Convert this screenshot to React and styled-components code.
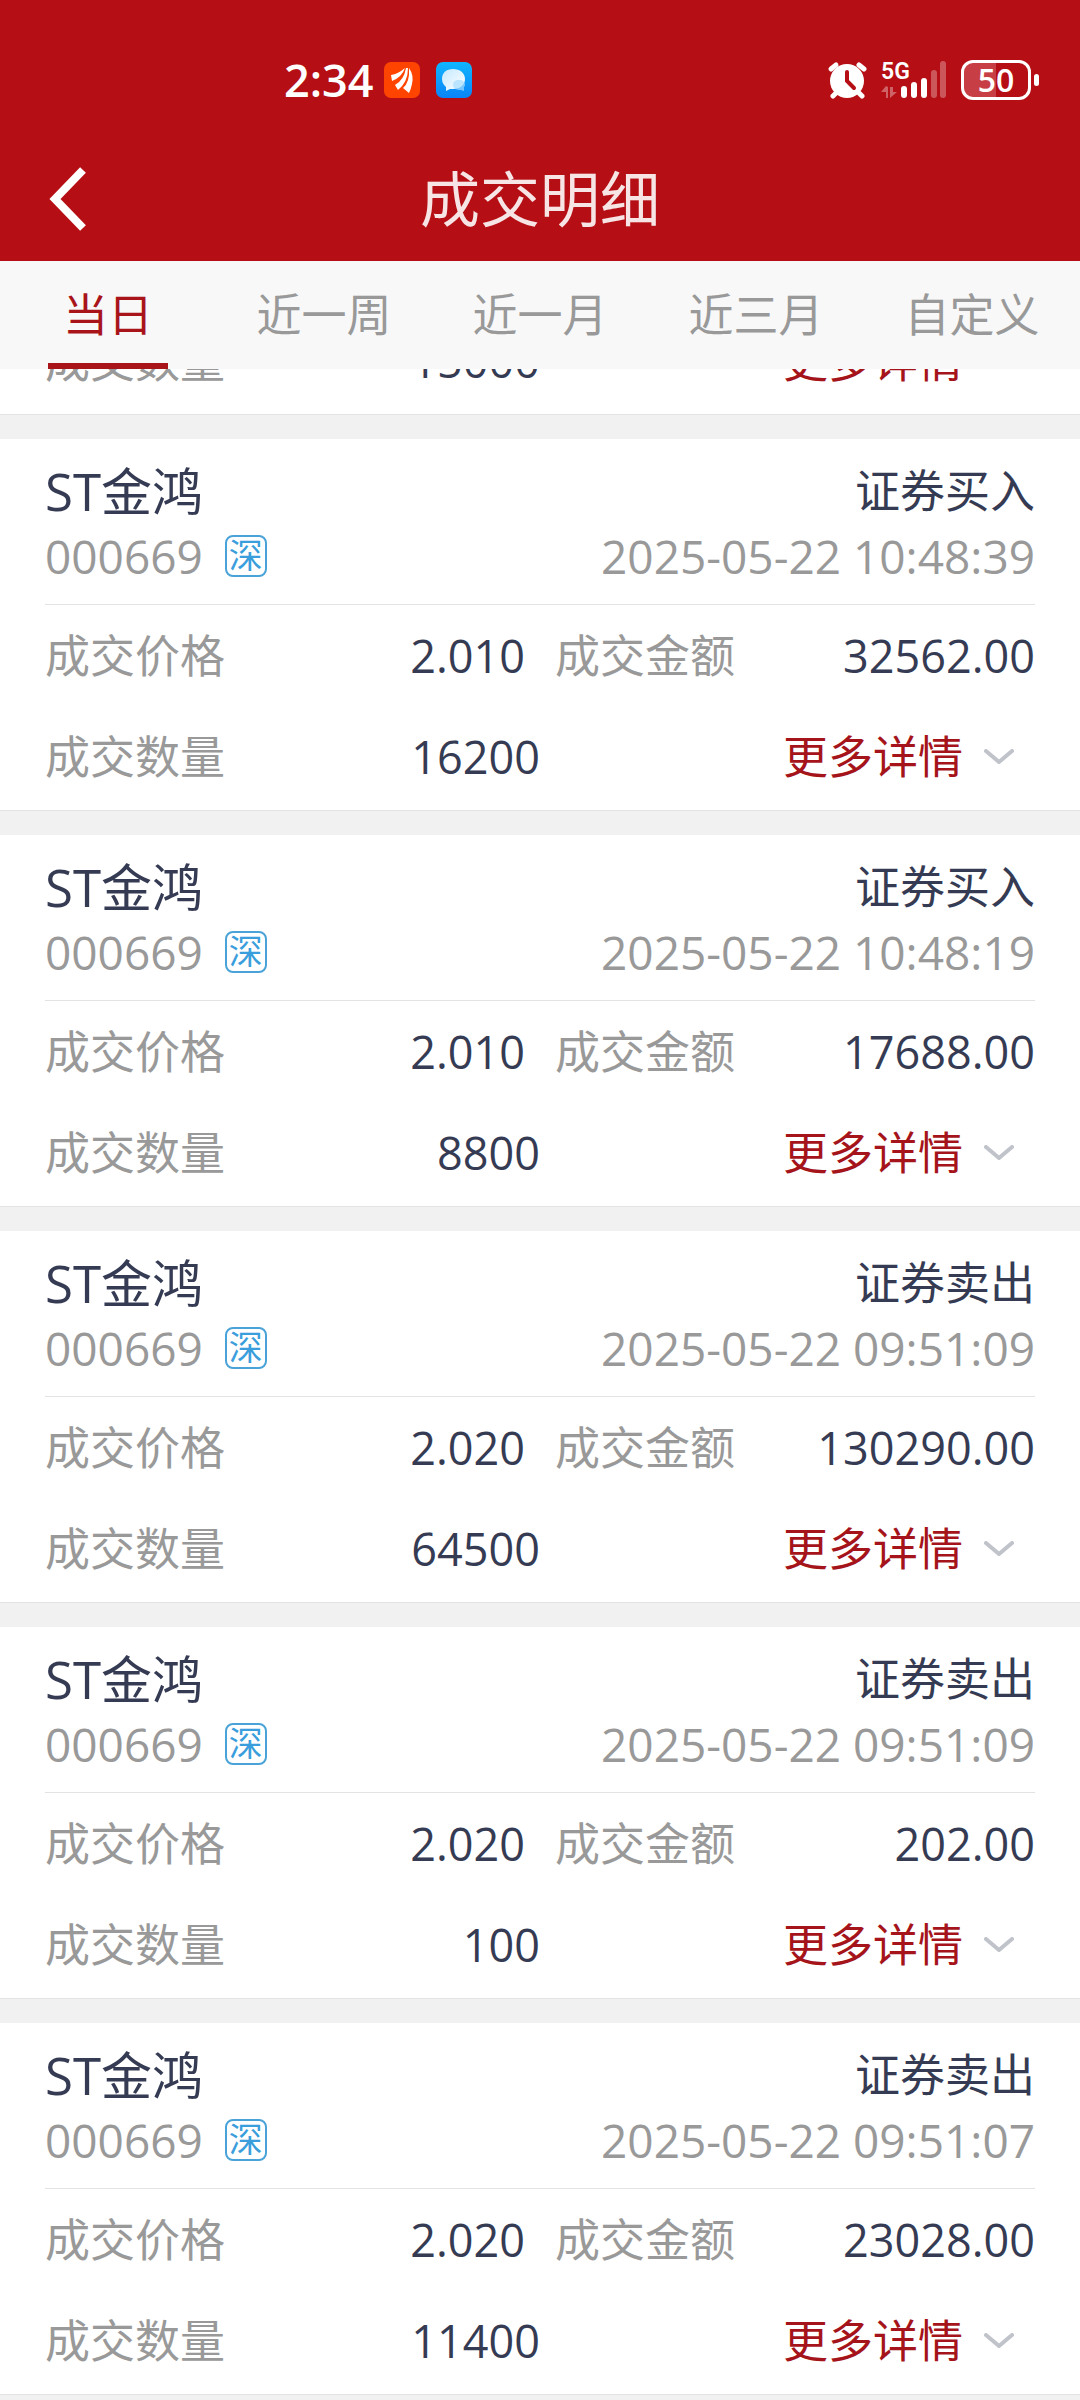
import { useState } from "react";
import styled, { createGlobalStyle } from "styled-components";

const tabs = ["当日", "近一周", "近一月", "近三月", "自定义"];

const trades = [
  {
    side: "证券买入",
    time: "2025-05-22 10:48:39",
    price: "2.010",
    amount: "32562.00",
    quantity: "16200",
  },
  {
    side: "证券买入",
    time: "2025-05-22 10:48:19",
    price: "2.010",
    amount: "17688.00",
    quantity: "8800",
  },
  {
    side: "证券卖出",
    time: "2025-05-22 09:51:09",
    price: "2.020",
    amount: "130290.00",
    quantity: "64500",
  },
  {
    side: "证券卖出",
    time: "2025-05-22 09:51:09",
    price: "2.020",
    amount: "202.00",
    quantity: "100",
  },
  {
    side: "证券卖出",
    time: "2025-05-22 09:51:07",
    price: "2.020",
    amount: "23028.00",
    quantity: "11400",
  },
];

function App() {
  const [active, setActive] = useState("当日");

  return (
    <Page>
      <GlobalStyle />
      <Header>
        <StatusBar />
        <TitleBar>
          <BackButton aria-label="返回">
            <svg width="40" height="64" viewBox="0 0 40 64">
              <path d="M35 3 L7 32 L35 61" fill="none" stroke="#fff" strokeWidth="8" />
            </svg>
          </BackButton>
          <Title>成交明细</Title>
        </TitleBar>
      </Header>
      <Tabs>
        {tabs.map((tab) => (
          <Tab key={tab} $active={tab === active} onClick={() => setActive(tab)}>
            {tab}
          </Tab>
        ))}
      </Tabs>
      <List>
        <ScrolledCard>
          <QuantityRow quantity="15000" />
        </ScrolledCard>
        {trades.map((trade, i) => (
          <Trade key={i} {...trade} />
        ))}
      </List>
    </Page>
  );
}

function Trade({ side, time, price, amount, quantity }) {
  return (
    <Card>
      <CardHead>
        <HeadLine>
          <Name>ST金鸿</Name>
          <Side>{side}</Side>
        </HeadLine>
        <HeadLine>
          <Code>
            000669
            <Market>深</Market>
          </Code>
          <time>{time}</time>
        </HeadLine>
      </CardHead>
      <Row $gap="30px">
        <Cell>
          <Label>成交价格</Label>
          <Value>{price}</Value>
        </Cell>
        <Cell>
          <Label>成交金额</Label>
          <Value>{amount}</Value>
        </Cell>
      </Row>
      <QuantityRow quantity={quantity} />
    </Card>
  );
}

function QuantityRow({ quantity }) {
  return (
    <Row $gap="0">
      <Cell>
        <Label>成交数量</Label>
        <Value>{quantity}</Value>
      </Cell>
      <MoreButton>
        更多详情
        <svg width="30" height="16" viewBox="0 0 30 16">
          <path
            d="M2 2 L15 13 L28 2"
            fill="none"
            stroke="#c1c3cb"
            strokeWidth="4"
            strokeLinecap="round"
            strokeLinejoin="round"
          />
        </svg>
      </MoreButton>
    </Row>
  );
}

function StatusBar() {
  return (
    <Status>
      <StatusGroup $gap="16px">
        <Clock>2:34</Clock>
        <svg width="36" height="36" viewBox="0 0 36 36">
          <rect width="36" height="36" rx="7" fill="#ff4400" />
          <path d="M7 13 Q14 12 21 6 Q18 15 8 19 Z" fill="#fff" />
          <path d="M22 6 L24 6 Q24 20 14 28 L11 23 Q20 18 22 6 Z" fill="#fff" />
          <path d="M25 6 Q30 13 28 22 Q27 27 25 31 L19 26 Q26 20 25 6 Z" fill="#fff" />
        </svg>
        <svg width="36" height="36" viewBox="0 0 36 36">
          <defs>
            <linearGradient id="chatBg" x1="0" y1="0" x2="0" y2="1">
              <stop offset="0" stopColor="#10b6ff" />
              <stop offset="1" stopColor="#0a84f8" />
            </linearGradient>
            <linearGradient id="chatBubble" x1="0" y1="0" x2="1" y2="1">
              <stop offset="0" stopColor="#c4e9ff" />
              <stop offset="1" stopColor="#fff" />
            </linearGradient>
          </defs>
          <rect width="36" height="36" rx="7" fill="url(#chatBg)" />
          <path
            d="M17 7 C24 7 29 11 29 17 C29 23 24 27 17 27 L14 27 L10 29 L10 25 C8 23 6 21 6 17 C6 11 10 7 17 7 Z"
            fill="url(#chatBubble)"
          />
          <path
            d="M23 18 C27 18 29 20 29 23 C29 24 28 25 28 25 L28 29 L25 28 C20 28 17 26 17 23 C17 20 19 18 23 18 Z"
            fill="#a5dbff"
            opacity="0.7"
          />
        </svg>
      </StatusGroup>
      <StatusGroup $gap="14px">
        <svg width="40" height="38" viewBox="0 0 40 38">
          <g stroke="#fff" strokeWidth="5" strokeLinecap="round">
            <path d="M4 8 L9 4" />
            <path d="M32 4 L37 8" />
            <path d="M11 30 L6 35" />
            <path d="M30 30 L35 35" />
          </g>
          <circle cx="20" cy="20" r="17" fill="#fff" />
          <path
            d="M20 11 V20 L27 27"
            fill="none"
            stroke="#b50f15"
            strokeWidth="4"
            strokeLinecap="round"
          />
        </svg>
        <svg width="66" height="38" viewBox="0 0 66 38" overflow="visible">
          <text x="0" y="18" fill="#fff" fontFamily="Roboto, sans-serif" fontSize="23" fontWeight="600">
            5G
          </text>
          <g fill="#fff">
            <path d="M5 26 V37 H7 V26 L5 25 L0 31 H5 Z" opacity="0.35" />
            <path d="M9 26 V37 L16 31 H12 V26 Z" opacity="0.35" />
            <rect x="20" y="25" width="6" height="12" rx="3" />
            <rect x="30" y="21" width="6" height="16" rx="3" />
            <rect x="40" y="17" width="6" height="20" rx="3" />
            <rect x="50" y="9" width="6" height="28" rx="3" opacity="0.3" />
            <rect x="59" y="0" width="6" height="37" rx="3" opacity="0.3" />
          </g>
        </svg>
        <Battery>
          <BatteryBody>50</BatteryBody>
          <BatteryTip />
        </Battery>
      </StatusGroup>
    </Status>
  );
}

const GlobalStyle = createGlobalStyle`
  * {
    box-sizing: border-box;
  }

  body {
    margin: 0;
    background: #f1f1f1;
  }

  button {
    border: 0;
    padding: 0;
    background: none;
    font: inherit;
    cursor: pointer;
  }

  svg {
    display: block;
    flex: none;
  }
`;

const Page = styled.div`
  min-height: 100vh;
  font-family: "Open Sans", "Noto Sans CJK SC", sans-serif;
  font-size: 45px;
  line-height: 66px;
  color: #363b54;
`;

const Header = styled.header`
  background: #b50f15;
  color: #fff;
`;

const Status = styled.div`
  display: flex;
  justify-content: space-between;
  align-items: flex-end;
  height: 100px;
  padding: 0 41px 0 284px;
`;

const StatusGroup = styled.div`
  display: flex;
  align-items: center;
  height: 40px;
  gap: ${(props) => props.$gap};
`;

const Clock = styled.span`
  font-size: 45px;
  font-weight: 600;
  margin-right: -6px;
`;

const Battery = styled.div`
  display: flex;
  align-items: center;
  gap: 3px;
`;

const BatteryBody = styled.div`
  width: 70px;
  height: 40px;
  border: 3px solid #fff;
  border-radius: 12px;
  background: linear-gradient(to right, #c73f44 50%, transparent 50%);
  font-size: 32px;
  font-weight: 600;
  line-height: 34px;
  text-align: center;
`;

const BatteryTip = styled.div`
  width: 5px;
  height: 12px;
  border-radius: 3px;
  background: #fff;
`;

const TitleBar = styled.div`
  display: grid;
  grid-template-columns: 135px 1fr 135px;
  align-items: center;
  height: 161px;
  padding-top: 36px;
`;

const BackButton = styled.button`
  display: flex;

  && {
    padding-left: 48px;
  }
`;

const Title = styled.h1`
  margin: 0;
  font-size: 60px;
  font-weight: 400;
  text-align: center;
  color: #f7e5e6;
`;

const Tabs = styled.nav`
  display: grid;
  grid-template-columns: repeat(5, 1fr);
  justify-items: center;
  height: 108px;
  background: #f8f8f8;
`;

const Tab = styled.button`
  width: 140px;
  color: ${(props) => (props.$active ? "#a8141a" : "#999")};

  &::after {
    content: "";
    display: block;
    width: 120px;
    height: 6px;
    margin: 15px auto 0;
    background: ${(props) => (props.$active ? "#a8141a" : "transparent")};
  }

  && {
    padding-top: 21px;
  }
`;

const List = styled.ul`
  margin: 0;
  padding: 0;
  list-style: none;
`;

const Card = styled.li`
  margin-bottom: 24px;
  padding: 0 45px 3px;
  border-bottom: 1px solid #e3e3e3;
  background: #fff;
`;

/* only the lower end shows under the tabs */
const ScrolledCard = styled(Card)`
  display: flex;
  flex-direction: column;
  justify-content: flex-end;
  height: 46px;
  overflow: hidden;
`;

const CardHead = styled.div`
  padding: 19px 0 16px;
  border-bottom: 1px solid #e3e3e3;
`;

const HeadLine = styled.div`
  display: flex;
  justify-content: space-between;
  align-items: center;
  height: 65px;
  font-size: 46px;
  color: #999;
`;

const Name = styled.span`
  font-size: 51px;
  color: #363b54;
`;

const Side = styled.span`
  font-size: 45px;
  color: #363b54;
`;

const Code = styled.span`
  display: flex;
  align-items: center;
  gap: 22px;
`;

const Market = styled.span`
  width: 42px;
  height: 42px;
  border: 2px solid #4aa3d8;
  border-radius: 8px;
  font-size: 34px;
  line-height: 36px;
  text-align: center;
  color: #3a9edc;
`;

const Row = styled.div`
  display: grid;
  grid-template-columns: 1fr 1fr;
  column-gap: ${(props) => props.$gap};
  align-items: center;
  flex: none;
  height: 101px;
`;

const Cell = styled.div`
  display: flex;
  justify-content: space-between;
`;

const Label = styled.span`
  color: #999;
`;

const Value = styled.span`
  color: #363b54;
`;

const MoreButton = styled.button`
  display: flex;
  justify-content: flex-end;
  align-items: center;
  gap: 21px;
  color: #a5141a;

  && {
    padding-right: 21px;
  }
`;

export default App;
